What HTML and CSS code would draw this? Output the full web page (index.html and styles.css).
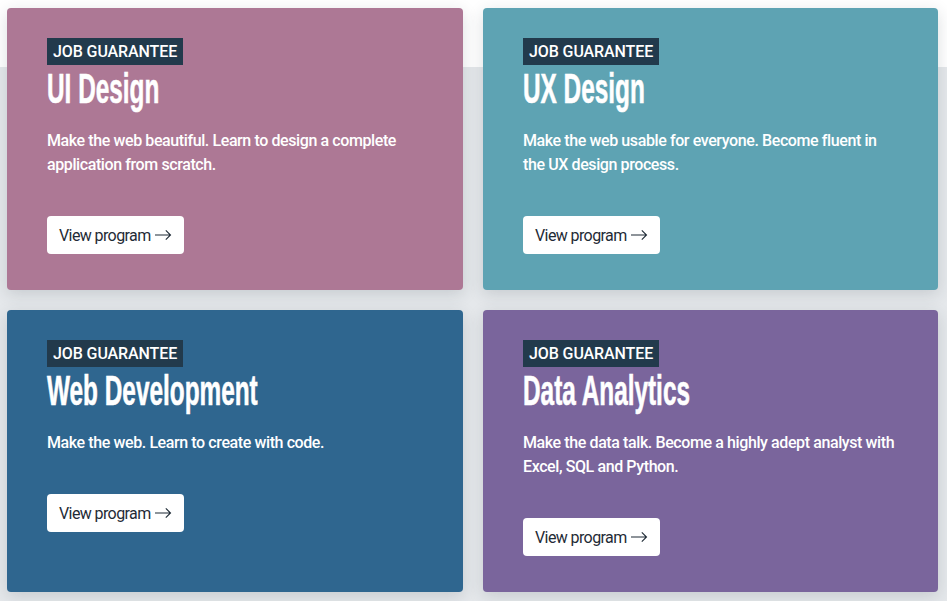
FILE: index.html
```html
<!DOCTYPE html>
<html lang="en">
<head>
<meta charset="utf-8">
<title>Programs</title>
<link rel="stylesheet" href="styles.css">
</head>
<body>
<div class="page">
  <div class="grid">
    <article class="card card-ui">
      <span class="badge">JOB GUARANTEE</span>
      <h2 class="title"><span class="title-text">UI Design</span></h2>
      <p class="desc">Make the web beautiful. Learn to design a complete application from scratch.</p>
      <a class="btn" href="#">View program <svg class="arrow" width="18" height="12" viewBox="0 0 18 12"><path d="M1 6H16.5M11.8 1.3L16.5 6L11.8 10.7" fill="none" stroke="currentColor" stroke-width="1.1"/></svg></a>
    </article>
    <article class="card card-ux">
      <span class="badge">JOB GUARANTEE</span>
      <h2 class="title"><span class="title-text">UX Design</span></h2>
      <p class="desc">Make the web usable for everyone. Become fluent in the UX design process.</p>
      <a class="btn" href="#">View program <svg class="arrow" width="18" height="12" viewBox="0 0 18 12"><path d="M1 6H16.5M11.8 1.3L16.5 6L11.8 10.7" fill="none" stroke="currentColor" stroke-width="1.1"/></svg></a>
    </article>
    <article class="card card-web">
      <span class="badge">JOB GUARANTEE</span>
      <h2 class="title"><span class="title-text">Web Development</span></h2>
      <p class="desc">Make the web. Learn to create with code.</p>
      <a class="btn" href="#">View program <svg class="arrow" width="18" height="12" viewBox="0 0 18 12"><path d="M1 6H16.5M11.8 1.3L16.5 6L11.8 10.7" fill="none" stroke="currentColor" stroke-width="1.1"/></svg></a>
    </article>
    <article class="card card-data">
      <span class="badge">JOB GUARANTEE</span>
      <h2 class="title"><span class="title-text">Data Analytics</span></h2>
      <p class="desc">Make the data talk. Become a highly adept analyst with Excel, SQL and Python.</p>
      <a class="btn" href="#">View program <svg class="arrow" width="18" height="12" viewBox="0 0 18 12"><path d="M1 6H16.5M11.8 1.3L16.5 6L11.8 10.7" fill="none" stroke="currentColor" stroke-width="1.1"/></svg></a>
    </article>
  </div>
</div>
</body>
</html>
```

FILE: styles.css
```css
* { box-sizing: border-box; }
html, body { margin: 0; padding: 0; }
body {
  background: linear-gradient(to bottom, #ffffff 0, #ffffff 67px, #e5e8eb 67px, #e5e8eb 100%);
  min-height: 601px;
  font-family: Roboto, "Liberation Sans", Arial, sans-serif;
  color: #ffffff;
}
.page {
  padding: 8px 9px 8px 7px;
}
.grid {
  display: grid;
  grid-template-columns: 456px 455px;
  column-gap: 20px;
  row-gap: 20px;
}
.card {
  border-radius: 4px;
  padding: 30px 40px 36px 40px;
  box-shadow: 0 4px 16px rgba(40, 50, 60, 0.16);
  display: flex;
  flex-direction: column;
  align-items: flex-start;
}
.card-ui { background: #ad7895; }
.card-ux { background: #5ea3b3; }
.card-web { background: #2f668f; }
.card-data { background: #7a659c; }
.badge {
  display: inline-block;
  background: #223a4c;
  color: #ffffff;
  font-weight: 500;
  font-size: 16px;
  line-height: 27px;
  height: 27px;
  padding: 0 6px;
  letter-spacing: -0.1px;
}
.title {
  margin: 0;
  height: 48px;
  font-family: "Liberation Sans", Arial, sans-serif;
  font-weight: 700;
  font-size: 42px;
  line-height: 47px;
  white-space: nowrap;
}
.title-text {
  display: inline-block;
  transform: scaleX(0.58);
  transform-origin: left center;
  -webkit-text-stroke: 0.6px #ffffff;
}
.desc {
  margin: 16px 0 39px 0;
  font-size: 16px;
  font-weight: 500;
  line-height: 24px;
  letter-spacing: -0.4px;
}
.btn {
  display: inline-flex;
  align-items: center;
  height: 38px;
  padding: 0 12px;
  background: #ffffff;
  border-radius: 4px;
  color: #1f2b36;
  text-decoration: none;
  font-size: 16px;
  font-weight: 400;
  letter-spacing: -0.6px;
}
.arrow {
  margin-left: 3px;
  display: block;
}
```
